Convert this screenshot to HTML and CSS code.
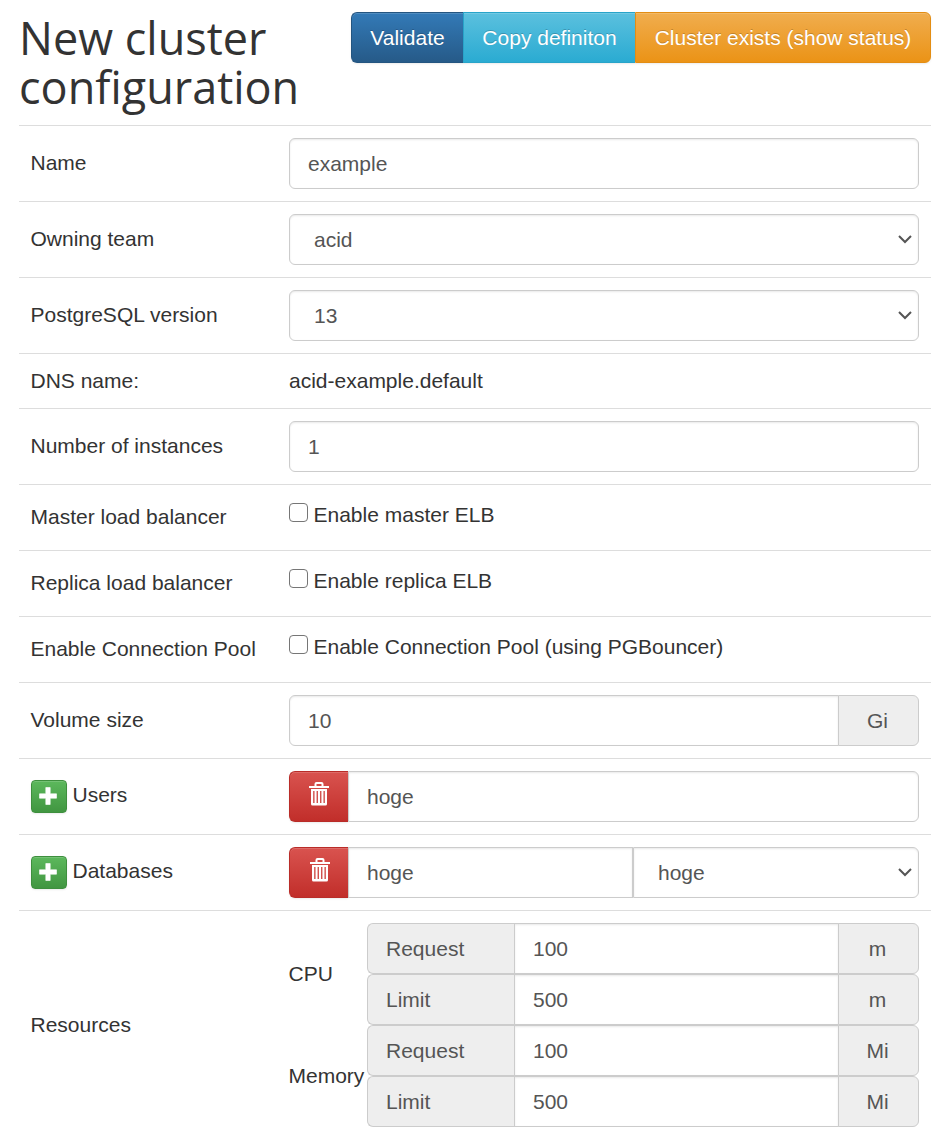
FILE: index.html
```
<!DOCTYPE html>
<html lang="en">
<head>
<meta charset="utf-8">
<title>New cluster configuration</title>
<link rel="stylesheet" href="styles.css">
</head>
<body>
<svg class="symbols" width="0" height="0">
  <symbol id="chevron" viewBox="0 0 14 9"><path d="M1 1l6 6 6-6" fill="none" stroke="#555" stroke-width="2"/></symbol>
  <symbol id="plus" viewBox="0 0 18 18"><path d="M6.8 .5h4.4v6.3h6.3v4.4h-6.3v6.3H6.8v-6.3H.5V6.800h6.300z" fill="#fff" stroke="#fff" stroke-width=".6" stroke-linejoin="round"/></symbol>
  <symbol id="trash" viewBox="0 0 20 24">
    <path d="M0 4h5.500V2Q5.500 0 7.500 0h5Q14.500 0 14.500 2v2H20v2H0z M7.500 2v2h5V2z" fill="#fff" fill-rule="evenodd"/>
    <path d="M2 7h16v15q0 1.500-1.500 1.500h-13Q2 23.500 2 22z M4.200 9v12h1.300V9z M7.600 9v12h1.300V9z M11.100 9v12h1.300V9z M14.500 9v12h1.300V9z" fill="#fff" fill-rule="evenodd"/>
  </symbol>
</svg>
<main class="page">
  <header class="header">
    <h1 class="title">New cluster configuration</h1>
    <div class="toolbar">
      <button class="btn primary">Validate</button>
      <button class="btn info">Copy definiton</button>
      <button class="btn warning">Cluster exists (show status)</button>
    </div>
  </header>
  <div class="row"><div class="label">Name</div><input class="control" value="example"></div>
  <div class="row"><div class="label">Owning team</div><div class="select-wrap"><select class="control select"><option>acid</option></select><svg class="chevron"><use href="#chevron"/></svg></div></div>
  <div class="row"><div class="label">PostgreSQL version</div><div class="select-wrap"><select class="control select"><option>13</option></select><svg class="chevron"><use href="#chevron"/></svg></div></div>
  <div class="row static"><div class="label">DNS name:</div><div>acid-example.default</div></div>
  <div class="row"><div class="label">Number of instances</div><input class="control" value="1"></div>
  <div class="row toggle"><div class="label">Master load balancer</div><label class="check"><input class="box" type="checkbox">Enable master ELB</label></div>
  <div class="row toggle"><div class="label">Replica load balancer</div><label class="check"><input class="box" type="checkbox">Enable replica ELB</label></div>
  <div class="row toggle"><div class="label">Enable Connection Pool</div><label class="check"><input class="box" type="checkbox">Enable Connection Pool (using PGBouncer)</label></div>
  <div class="row"><div class="label">Volume size</div><div class="group"><input class="control" value="10"><span class="addon unit">Gi</span></div></div>
  <div class="row"><div class="label with-add"><button class="add" aria-label="Add user"><svg class="plus"><use href="#plus"/></svg></button><span>Users</span></div><div class="group"><button class="remove" aria-label="Remove user"><svg class="trash"><use href="#trash"/></svg></button><input class="control" value="hoge"></div></div>
  <div class="row"><div class="label with-add"><button class="add" aria-label="Add database"><svg class="plus"><use href="#plus"/></svg></button><span>Databases</span></div><div class="group database"><button class="remove" aria-label="Remove database"><svg class="trash"><use href="#trash"/></svg></button><input class="control" value="hoge"><div class="select-wrap"><select class="control select"><option>hoge</option></select><svg class="chevron"><use href="#chevron"/></svg></div></div></div>
  <div class="row resources"><div class="label">Resources</div>
    <div class="limits">
      <div class="kind">CPU</div>
      <div>
        <div class="group"><span class="addon bound">Request</span><input class="control" value="100"><span class="addon unit">m</span></div>
        <div class="group"><span class="addon bound">Limit</span><input class="control" value="500"><span class="addon unit">m</span></div>
      </div>
      <div class="kind">Memory</div>
      <div>
        <div class="group"><span class="addon bound">Request</span><input class="control" value="100"><span class="addon unit">Mi</span></div>
        <div class="group"><span class="addon bound">Limit</span><input class="control" value="500"><span class="addon unit">Mi</span></div>
      </div>
    </div>
  </div>
</main>
</body>
</html>
```
FILE: styles.css
```
* { box-sizing: border-box; }
body { margin: 0; background: #fff; color: #333; font: 21px/30px "Liberation Sans", Arial, sans-serif; overflow: hidden; }
button, input, select { font: inherit; margin: 0; }
.symbols { display: none; }
.page { width: 912px; margin-left: 19px; }
.header { height: 125px; padding-top: 12px; display: flex; justify-content: space-between; align-items: flex-start; }
.title { margin: 1px 0 0; width: 300px; font: 400 45px/49px "Open Sans", sans-serif; }
.toolbar { display: flex; width: 580px; flex: none; margin-left: -300px; border-radius: 6px; box-shadow: 0 1px 2px rgba(0,0,0,.08); }
.btn { height: 51px; padding: 0; border: 1px solid; color: #fff; text-shadow: 0 -1px 0 rgba(0,0,0,.2); box-shadow: inset 0 1px 0 rgba(255,255,255,.15); white-space: nowrap; }
.primary { width: 112px; background: linear-gradient(#337ab7, #265a88); border-color: #245580; border-radius: 6px 0 0 6px; border-right: 0; }
.info { width: 172px; background: linear-gradient(#5bc0de, #2aabd2); border-color: #28a4c9; border-right: 0; }
.warning { width: 296px; background: linear-gradient(#f0ad4e, #eb9316); border-color: #e38d13; border-radius: 0 6px 6px 0; }
.row { height: 76px; border-top: 1px solid #ddd; padding: 12px; display: grid; grid-template-columns: 258px 1fr; align-items: center; }
.label { margin: -1px 0 0 -0.5px; }
.static { height: 55px; }
.toggle .label { margin-top: -2px; }
.toggle { height: 66px; }
.check { display: flex; align-items: center; margin-top: -6px; }
.box { width: 19px; height: 19px; margin: -5px 5.5px 0 0; appearance: none; border: 1px solid #767676; border-radius: 4px; background: #fff; }
.control { display: block; width: 100%; min-width: 0; height: 51px; padding: 0 18px; border: 1px solid #ccc; border-radius: 6px; color: #555; background: #fff; box-shadow: inset 0 1px 2px rgba(0,0,0,.09); }
.select { appearance: none; padding-left: 24px; }
.select-wrap { position: relative; }
.chevron { position: absolute; right: 7px; top: 21px; width: 14px; height: 9px; }
.group { display: flex; height: 51px; }
.group > * { flex: 1 1 0; }
.group > :not(:last-child) { border-top-right-radius: 0; border-bottom-right-radius: 0; }
.group > .control:not(:first-child), .group > .addon:not(:first-child), .group .select { border-top-left-radius: 0; border-bottom-left-radius: 0; }
.addon { border: 1px solid #ccc; border-radius: 6px; background: #eee; color: #555; line-height: 50px; }
.group > .unit { flex: 0 0 81px; margin-left: -1px; text-align: center; padding-right: 2px; }
.group > .bound { flex: 0 0 147px; border-right: 0; padding-left: 18px; }
.group > .remove { flex: 0 0 59px; padding: 0 0 5px; display: flex; align-items: center; justify-content: center; border: 1px solid #b92c28; border-right: 0; border-radius: 6px 0 0 6px; background: linear-gradient(#d9534f, #c12e2a); box-shadow: inset 0 1px 0 rgba(255,255,255,.15), 0 1px 2px rgba(0,0,0,.08); }
.database > .select-wrap { flex: 0 0 286px; }
.database > .remove { padding-left: 1px; }
.trash { width: 20px; height: 24px; }
.with-add { display: flex; align-items: center; gap: 5.5px; margin-left: 0; }
.with-add span { margin-top: -2px; }
.add { width: 36px; height: 33px; margin-top: 1px; padding: 0 2px 1px 0; display: flex; align-items: center; justify-content: center; border: 1px solid #3e8f3e; border-radius: 4px; background: linear-gradient(#5cb85c, #419641); box-shadow: inset 0 1px 0 rgba(255,255,255,.15), 0 1px 2px rgba(0,0,0,.08); }
.plus { width: 18px; height: 18px; }
.resources { height: 229px; }
.limits { display: grid; grid-template-columns: 78px 1fr; align-items: center; }
.kind { margin: -1px 0 0 -0.5px; }
```
